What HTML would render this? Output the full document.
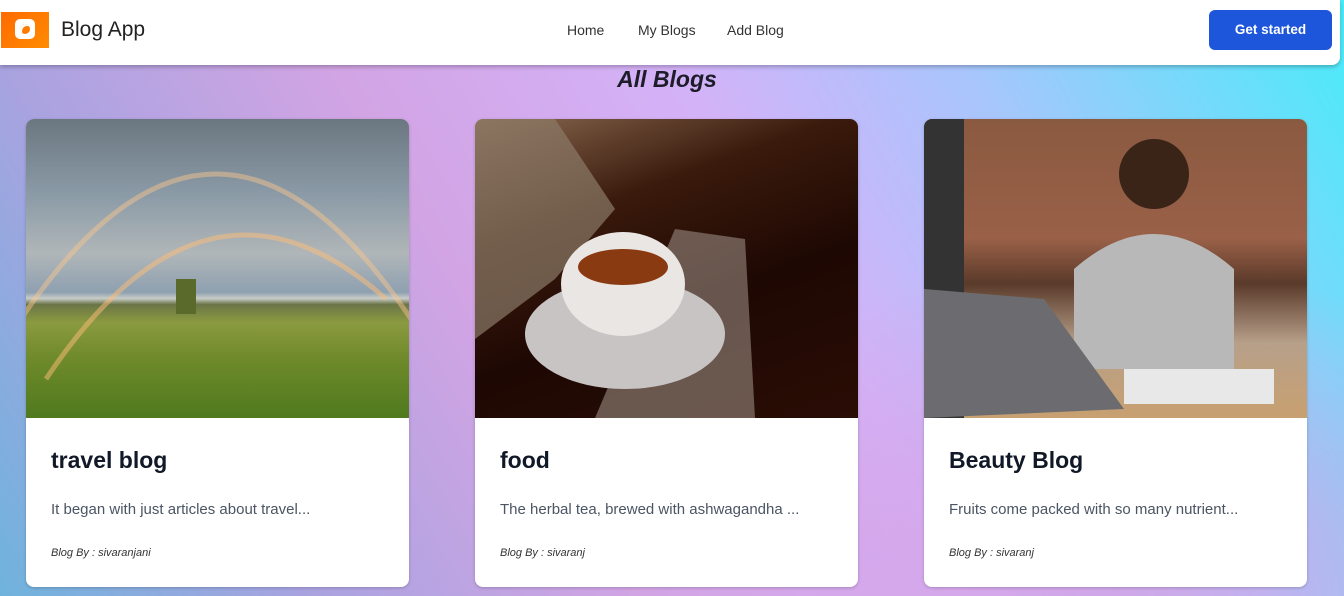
<!DOCTYPE html>
<html><head><style>
*{margin:0;padding:0;box-sizing:border-box}
body{width:1344px;height:596px;overflow:hidden;font-family:"Liberation Sans",sans-serif;position:relative;
background:linear-gradient(60deg,#6fb3dd 0%,#a8a3e0 18%,#d2a4e4 38%,#d4b2f8 58%,#a9c5fc 75%,#47ecfa 100%);}
.bgov{position:absolute;inset:0;background:radial-gradient(ellipse 500px 300px at 1100px 560px,rgba(214,160,226,.8),transparent);}
nav{position:absolute;left:0;top:0;width:1340px;height:65px;background:#fff;border-bottom-right-radius:8px;box-shadow:0 2px 4px rgba(0,0,0,.25);}
.logo{position:absolute;left:1px;top:12px;width:48px;height:36px;background:linear-gradient(135deg,#ff6a00,#ff8c00);}
.logo div{position:absolute;left:14px;top:7px;width:20px;height:20px;background:#fff;border-radius:5px}
.logo div:after{content:"";position:absolute;left:5px;top:5px;width:10px;height:10px;border-radius:50%;background:#ff7a00;box-shadow:inset 2px 2px 0 #fff}
.brand{position:absolute;left:61px;top:18px;font-size:21px;color:#222}
.links{position:absolute;top:22px;font-size:14px;color:#333}
.btn{position:absolute;left:1209px;top:10px;width:123px;height:40px;background:#1d56db;border-radius:6px;color:#fff;font-weight:bold;font-size:13.5px;text-align:center;line-height:40px}
h1{position:absolute;left:0;width:1334px;top:66px;text-align:center;font-size:23px;font-style:italic;font-weight:bold;color:#1d1d2a}
.card{position:absolute;top:119px;width:383px;height:468px;background:#fff;border-radius:8px;overflow:hidden;box-shadow:0 1px 3px rgba(0,0,0,.2)}
.img{height:299px;position:relative;overflow:hidden}
.t{position:absolute;left:25px;top:328px;font-size:23px;font-weight:bold;color:#111827}
.d{position:absolute;left:25px;top:382px;font-size:15px;color:#4b5563}
.b{position:absolute;left:25px;top:428px;font-size:11px;font-style:italic;color:#333}
</style></head><body>
<div class="bgov"></div>
<nav>
<div class="logo"><div></div></div>
<div class="brand">Blog App</div>
<div class="links" style="left:567px">Home</div>
<div class="links" style="left:638px">My Blogs</div>
<div class="links" style="left:727px">Add Blog</div>
<div class="btn">Get started</div>
</nav>
<h1>All Blogs</h1>

<div class="card" style="left:26px">
<div class="img" style="background:linear-gradient(180deg,#6b7780 0%,#8a9aa6 25%,#b0b6b8 45%,#8ea0b0 58%,#c8ccc8 60%,#6a7548 62%,#8b9a40 68%,#6f8a2a 80%,#4f7a1e 100%)">
<svg width="383" height="299" style="position:absolute;left:0;top:0"><path d="M-5 200 Q190 -90 385 200" fill="none" stroke="rgba(255,200,140,.45)" stroke-width="5"/><path d="M20 260 Q180 20 360 180" fill="none" stroke="rgba(255,190,120,.5)" stroke-width="5"/><rect x="150" y="160" width="20" height="35" fill="#5a6a2a"/></svg>
</div>
<div class="t">travel blog</div><div class="d">It began with just articles about travel...</div><div class="b">Blog By : sivaranjani</div></div>

<div class="card" style="left:475px">
<div class="img" style="background:linear-gradient(160deg,#8a6a50 0%,#3a1a0c 30%,#1e0803 60%,#2a0d05 100%)">
<svg width="383" height="299" style="position:absolute;left:0;top:0"><path d="M0 0 L80 0 L140 90 L80 160 L0 220Z" fill="#8c7a68" opacity=".7"/><path d="M200 110 L270 120 L280 299 L120 299Z" fill="#9a8a80" opacity=".6"/><ellipse cx="150" cy="215" rx="100" ry="55" fill="#c8c4c4"/><ellipse cx="148" cy="165" rx="62" ry="52" fill="#eae6e4"/><ellipse cx="148" cy="148" rx="45" ry="18" fill="#8a3a10"/></svg>
</div>
<div class="t">food</div><div class="d">The herbal tea, brewed with ashwagandha ...</div><div class="b">Blog By : sivaranj</div></div>

<div class="card" style="left:924px">
<div class="img" style="background:linear-gradient(180deg,#8a5a40 0%,#9a6048 40%,#5a3a2a 55%,#b7a08a 75%,#c8a070 100%)">
<svg width="383" height="299" style="position:absolute;left:0;top:0"><rect x="0" y="0" width="40" height="299" fill="#333"/><circle cx="230" cy="55" r="35" fill="#3a2418"/><path d="M150 150 Q230 80 310 150 L310 250 L150 250Z" fill="#b8b8b8"/><path d="M0 170 L120 180 L200 290 L0 299Z" fill="#6c6c70"/><rect x="200" y="250" width="150" height="35" fill="#e8e8e8"/></svg>
</div>
<div class="t">Beauty Blog</div><div class="d">Fruits come packed with so many nutrient...</div><div class="b">Blog By : sivaranj</div></div>
</body></html>
